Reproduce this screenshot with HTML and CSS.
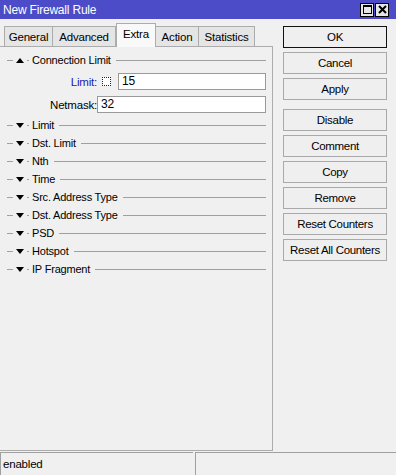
FILE: index.html
```html
<!DOCTYPE html>
<html lang="en">

<head>
    <meta charset="UTF-8" />
    <title>New Firewall Rule</title>
    <link rel="stylesheet" href="styles.css">
</head>

<body>
    <div class="titlebar">
        <span class="title">New Firewall Rule</span>
        <div class="win-buttons">
            <span class="win-btn">
                <svg width="9" height="9" viewBox="0 0 9 9"><rect x="0.5" y="0.5" width="8" height="8" fill="none" stroke="#000" /><line x1="0" y1="1.5" x2="9" y2="1.5" stroke="#000" /></svg>
            </span>
            <span class="win-btn">
                <svg width="9" height="9" viewBox="0 0 9 9"><path d="M1 1 L8 8 M8 1 L1 8" stroke="#000" stroke-width="2" /></svg>
            </span>
        </div>
    </div>

    <div class="main">
        <div class="left">
            <div class="tabs">
                <div class="tab tab-general">General</div>
                <div class="tab tab-advanced">Advanced</div>
                <div class="tab tab-extra active">Extra</div>
                <div class="tab tab-action">Action</div>
                <div class="tab tab-stats">Statistics</div>
            </div>

            <div class="panel">
                <div class="group">
                    <span class="dash"></span>
                    <svg class="arrow" width="8" height="5" viewBox="0 0 8 5"><polygon points="0,5 8,5 4,0" fill="#000" /></svg>
                    <span class="dot"></span>
                    <span class="group-name">Connection Limit</span>
                    <span class="line"></span>
                </div>

                <div class="field field-limit">
                    <label class="label blue">Limit:</label>
                    <span class="check"></span>
                    <div class="input">15</div>
                </div>
                <div class="field field-netmask">
                    <label class="label">Netmask:</label>
                    <div class="input">32</div>
                </div>

                <div class="group first-closed">
                    <span class="dash"></span>
                    <svg class="arrow" width="8" height="5" viewBox="0 0 8 5"><polygon points="0,0 8,0 4,5" fill="#000" /></svg>
                    <span class="dot"></span>
                    <span class="group-name">Limit</span>
                    <span class="line"></span>
                </div>
                <div class="group">
                    <span class="dash"></span>
                    <svg class="arrow" width="8" height="5" viewBox="0 0 8 5"><polygon points="0,0 8,0 4,5" fill="#000" /></svg>
                    <span class="dot"></span>
                    <span class="group-name">Dst. Limit</span>
                    <span class="line"></span>
                </div>
                <div class="group">
                    <span class="dash"></span>
                    <svg class="arrow" width="8" height="5" viewBox="0 0 8 5"><polygon points="0,0 8,0 4,5" fill="#000" /></svg>
                    <span class="dot"></span>
                    <span class="group-name">Nth</span>
                    <span class="line"></span>
                </div>
                <div class="group">
                    <span class="dash"></span>
                    <svg class="arrow" width="8" height="5" viewBox="0 0 8 5"><polygon points="0,0 8,0 4,5" fill="#000" /></svg>
                    <span class="dot"></span>
                    <span class="group-name">Time</span>
                    <span class="line"></span>
                </div>
                <div class="group">
                    <span class="dash"></span>
                    <svg class="arrow" width="8" height="5" viewBox="0 0 8 5"><polygon points="0,0 8,0 4,5" fill="#000" /></svg>
                    <span class="dot"></span>
                    <span class="group-name">Src. Address Type</span>
                    <span class="line"></span>
                </div>
                <div class="group">
                    <span class="dash"></span>
                    <svg class="arrow" width="8" height="5" viewBox="0 0 8 5"><polygon points="0,0 8,0 4,5" fill="#000" /></svg>
                    <span class="dot"></span>
                    <span class="group-name">Dst. Address Type</span>
                    <span class="line"></span>
                </div>
                <div class="group">
                    <span class="dash"></span>
                    <svg class="arrow" width="8" height="5" viewBox="0 0 8 5"><polygon points="0,0 8,0 4,5" fill="#000" /></svg>
                    <span class="dot"></span>
                    <span class="group-name">PSD</span>
                    <span class="line"></span>
                </div>
                <div class="group">
                    <span class="dash"></span>
                    <svg class="arrow" width="8" height="5" viewBox="0 0 8 5"><polygon points="0,0 8,0 4,5" fill="#000" /></svg>
                    <span class="dot"></span>
                    <span class="group-name">Hotspot</span>
                    <span class="line"></span>
                </div>
                <div class="group">
                    <span class="dash"></span>
                    <svg class="arrow" width="8" height="5" viewBox="0 0 8 5"><polygon points="0,0 8,0 4,5" fill="#000" /></svg>
                    <span class="dot"></span>
                    <span class="group-name">IP Fragment</span>
                    <span class="line"></span>
                </div>
            </div>
        </div>

        <div class="buttons">
            <button class="btn default">OK</button>
            <button class="btn">Cancel</button>
            <button class="btn">Apply</button>
            <button class="btn spaced">Disable</button>
            <button class="btn">Comment</button>
            <button class="btn">Copy</button>
            <button class="btn">Remove</button>
            <button class="btn">Reset Counters</button>
            <button class="btn">Reset All Counters</button>
        </div>
    </div>

    <div class="statusbar">
        <div class="status status-left">enabled</div>
        <div class="status status-right"></div>
    </div>
</body>

</html>
```

FILE: styles.css
```css
* {
    box-sizing: border-box;
}

body {
    margin: 0;
    width: 396px;
    height: 475px;
    display: flex;
    flex-direction: column;
    background-color: #f0f0f0;
    font-family: "Liberation Sans", Arial, sans-serif;
    font-size: 11px;
    letter-spacing: -0.2px;
    color: #000;
    overflow: hidden;
}

/* title bar */
.titlebar {
    height: 19px;
    background-color: #4c4cc8;
    color: #fff;
    display: flex;
    align-items: center;
    justify-content: space-between;
    padding: 0 7px 0 3px;
}

.title {
    font-size: 12px;
}

.win-buttons {
    display: flex;
    gap: 1px;
}

.win-btn {
    width: 14px;
    height: 14px;
    border: 1px solid #000;
    background-color: #e6e6e6;
    display: flex;
    align-items: center;
    justify-content: center;
}

/* main area */
.main {
    flex: 1;
    display: flex;
}

.left {
    width: 273px;
    display: flex;
    flex-direction: column;
}

.tabs {
    display: flex;
    align-items: flex-end;
    padding: 4px 0 0 4px;
}

.tab {
    height: 20px;
    border: 1px solid #acacac;
    border-bottom: none;
    background-color: #e5e5e5;
    display: flex;
    align-items: center;
    justify-content: center;
    font-size: 11.5px;
}

.tab + .tab {
    border-left: none;
}

.tab.active {
    height: 24px;
    margin-bottom: -1px;
    background-color: #f9f9f9;
    border-left: 1px solid #acacac;
    position: relative;
    z-index: 1;
    padding-bottom: 3px;
}

.tab-general { width: 49px; }
.tab-advanced { width: 63px; }
.tab-extra { width: 40px; }
.tab-action { width: 43px; border-left: none; }
.tab-stats { width: 56px; }

.panel {
    flex: 1;
    margin-bottom: 1px;
    border: 1px solid #acacac;
    border-left: none;
    background-color: #f0f0f0;
    padding: 4px 6px 0 7px;
}

/* collapsible groups */
.group {
    height: 18px;
    display: flex;
    align-items: center;
}

.dash {
    width: 6px;
    height: 1px;
    background-color: #a0a0a0;
    margin-right: 3px;
}

.arrow {
    display: block;
}

.dot {
    width: 2px;
    height: 1px;
    background-color: #a0a0a0;
    margin: 0 3px;
}

.group-name {
    white-space: nowrap;
}

.line {
    flex: 1;
    height: 1px;
    background-color: #a0a0a0;
    margin-left: 5px;
}

.first-closed {
    margin-top: 3px;
}

/* fields */
.field {
    height: 17px;
    display: flex;
    align-items: center;
}

.field-limit {
    margin-top: 4px;
}

.field-netmask {
    margin-top: 6px;
}

.label {
    width: 90px;
    text-align: right;
    font-size: 11.5px;
}

.blue {
    color: #1c1cb4;
}

.check {
    width: 9px;
    height: 9px;
    margin-left: 5px;
    margin-right: 7px;
    border: 1px dotted #222;
    background-color: #fff;
}

.input {
    flex: 1;
    height: 17px;
    border: 1px solid #9a9a9a;
    background-color: #fff;
    padding-left: 3px;
    font-size: 12px;
    line-height: 15px;
}

/* buttons */
.buttons {
    width: 104px;
    margin-left: 10px;
    padding-top: 7px;
    display: flex;
    flex-direction: column;
    gap: 4px;
}

.btn {
    height: 22px;
    padding: 0;
    border: 1px solid #a9a9a9;
    background-color: #efefef;
    font-family: "Liberation Sans", Arial, sans-serif;
    font-size: 11.5px;
    letter-spacing: -0.3px;
    color: #000;
}

.btn.default {
    border-color: #111;
}

.btn.spaced {
    margin-top: 5px;
}

/* status bar */
.statusbar {
    height: 23px;
    display: flex;
    gap: 2px;
}

.status {
    border-top: 1px solid #a0a0a0;
    border-left: 1px solid #a0a0a0;
    display: flex;
    align-items: center;
    padding-left: 2px;
    font-size: 11.5px;
}

.status-left {
    width: 193px;
}

.status-right {
    flex: 1;
}
```
